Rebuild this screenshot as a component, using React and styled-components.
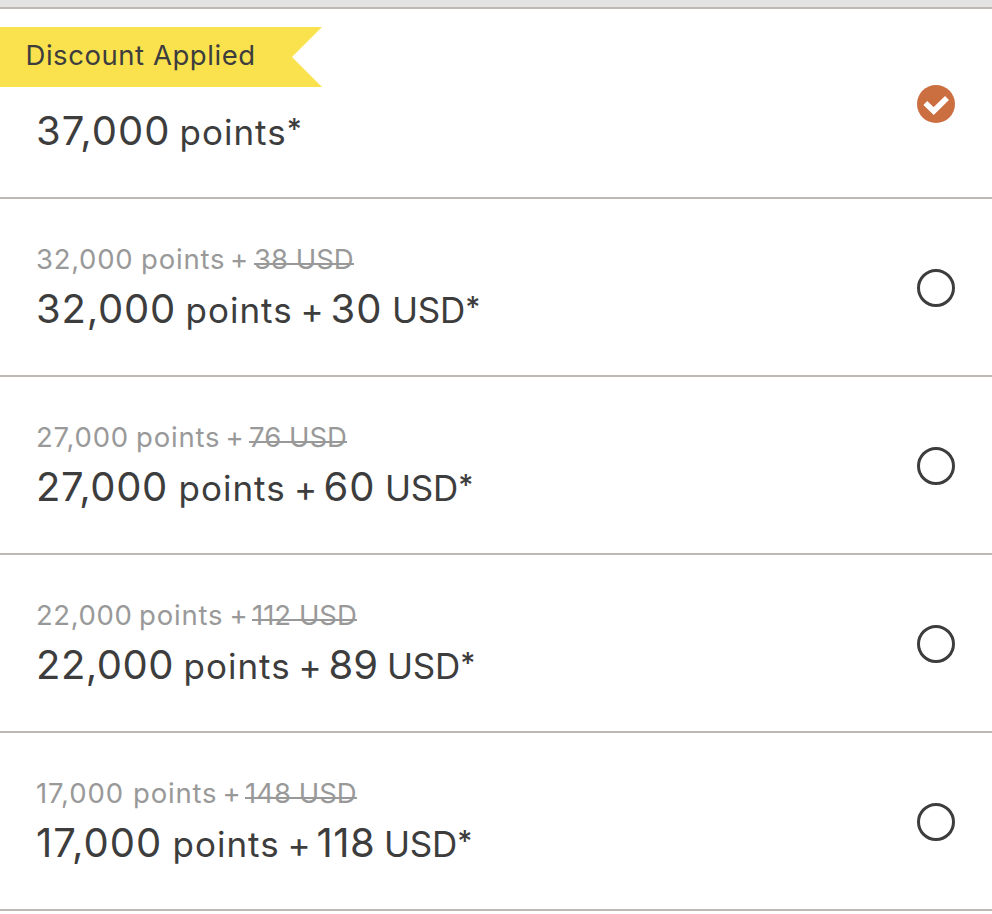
import React from 'react';
import styled, { createGlobalStyle } from 'styled-components';

// [text, advance in px, tracking in px]
const options = [
    {
        selected: true,
        badge: 'Discount Applied',
        price: [['37,000', 143.5, 1], ['points', 120, 1]],
    },
    {
        was: [['32,000', 105, 0.7], ['points', 89, 0.8], ['+', 24, 0]],
        struck: ['38 USD', 99, 0],
        price: [['32,000', 149.5, 0.8], ['points', 115, 1], ['+', 30, 0], ['30', 61.5, 1], ['USD', 86, -0.2]],
    },
    {
        was: [['27,000', 100, 0.8], ['points', 89.5, 0.8], ['+', 23.5, 0]],
        struck: ['76 USD', 97, 0],
        price: [['27,000', 142.5, 0.6], ['points', 115.5, 1], ['+', 29.5, 0], ['60', 61.5, 1], ['USD', 86, -0.2]],
    },
    {
        was: [['22,000', 103, 0.6], ['points', 90.5, 0.8], ['+', 22.5, 0]],
        struck: ['112 USD', 104, 0],
        price: [['22,000', 147.5, 0.5], ['points', 115, 1], ['+', 30, 0], ['89', 58.5, 0], ['USD', 86, -0.2]],
    },
    {
        was: [['17,000', 97, 0.9], ['points', 89.5, 0.8], ['+', 22.5, 0]],
        struck: ['148 USD', 111, 0],
        price: [['17,000', 136.5, 1], ['points', 115, 1], ['+', 29, 0], ['118', 67.5, 0.5], ['USD', 86, -0.2]],
    },
];

const isNumber = (text) => /^\d/.test(text);

const Option = ({ selected, badge, was, struck, price }) => (
    <Row $tall={selected}>
        <Details>
            {badge && (
                <Ribbon>
                    <RibbonText>{badge}</RibbonText>
                </Ribbon>
            )}
            {was && (
                <WasLine>
                    {was.map(([text, width, tracking]) => (
                        <Part key={text} $width={width} $tracking={tracking}>{text}</Part>
                    ))}
                    <Struck $width={struck[1]} $tracking={struck[2]}>{struck[0]}</Struck>
                </WasLine>
            )}
            <PriceLine $badged={!!badge}>
                {price.map(([text, width, tracking], i) => (
                    <PricePart key={text} $big={isNumber(text)} $width={width} $tracking={tracking}>
                        {text}
                        {i === price.length - 1 && <Star>*</Star>}
                    </PricePart>
                ))}
            </PriceLine>
        </Details>
        <Radio role="radio" aria-checked={!!selected} $selected={selected}>
            {selected && (
                <svg width="38" height="38" viewBox="0 0 38 38">
                    <path d="M8.3 18 L16.7 26 L30 12.9" />
                </svg>
            )}
        </Radio>
    </Row>
);

const App = () => (
    <Page>
        <GlobalStyle />
        <TopBar />
        {options.map((option) => (
            <Option key={option.price[0][0]} {...option} />
        ))}
    </Page>
);

const GlobalStyle = createGlobalStyle`
    body {
        margin: 0;
        background: #fff;
    }
`;

const Page = styled.main`
    width: 100%;
    height: 914px;
    overflow: hidden;
    background: #fff;
    color: #3d3d3d;
    font-family: Inter, Roboto, sans-serif;
`;

const TopBar = styled.div`
    box-sizing: border-box;
    height: 9px;
    background: #e3e3e3;
    border-bottom: 2px solid #bfb9b5;
`;

const Row = styled.section`
    display: flex;
    align-items: center;
    justify-content: space-between;
    height: ${(p) => (p.$tall ? 190 : 178)}px;
    padding-right: 37px;
    box-sizing: border-box;
    box-shadow: inset 0 -2px #bfb9b5;
`;

const Details = styled.div`
    align-self: stretch;
`;

const Ribbon = styled.div`
    display: flex;
    width: 322px;
    height: 60px;
    margin-top: 18px;
    background: #f9e24e;
    clip-path: polygon(0 0, 100% 0, 292px 50%, 100% 100%, 0 100%);
`;

const RibbonText = styled.span`
    padding-left: 25.5px;
    font-size: 27.5px;
    line-height: 57px;
    letter-spacing: 0.55px;
    white-space: nowrap;
`;

const Line = styled.div`
    display: flex;
    align-items: baseline;
    padding-left: 36px;
    white-space: nowrap;
`;

const WasLine = styled(Line)`
    height: 40px;
    margin-top: 40px;
    color: #999;
    font-size: 27.5px;
    line-height: 40px;
`;

const PriceLine = styled(Line)`
    height: 60px;
    margin-top: ${(p) => (p.$badged ? 14 : 0)}px;
    line-height: 60px;
`;

const Part = styled.span`
    flex: 0 0 ${(p) => p.$width}px;
    letter-spacing: ${(p) => p.$tracking}px;
`;

const PricePart = styled(Part)`
    font-size: ${(p) => (p.$big ? 40 : 35)}px;
`;

const Star = styled.span`
    font-size: 29px;
    font-weight: 500;
    line-height: 0;
    vertical-align: 6px;
`;

const Struck = styled(Part)`
    position: relative;

    &::after {
        content: '';
        position: absolute;
        left: 0;
        right: 0;
        top: 24px;
        height: 1.5px;
        background: #999;
    }
`;

const Radio = styled.div`
    box-sizing: border-box;
    width: 38px;
    height: 38px;
    border: ${(p) => (p.$selected ? 'none' : '3px solid #3d3d3d')};
    border-radius: 50%;
    background: ${(p) => (p.$selected ? '#cb6e40' : '#fff')};

    & path {
        fill: none;
        stroke: #fff;
        stroke-width: 5.6;
        stroke-linecap: butt;
        stroke-linejoin: miter;
    }
`;

export default App;
